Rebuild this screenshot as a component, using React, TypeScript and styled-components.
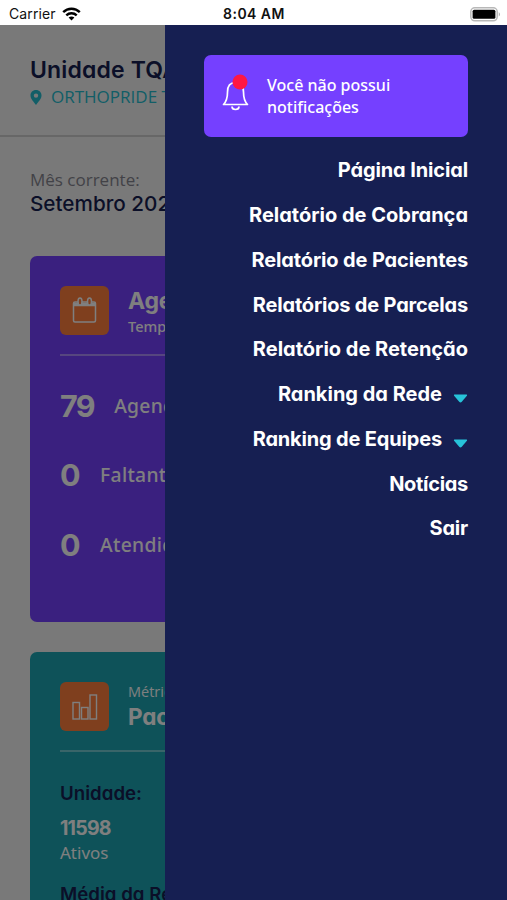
import React from "react";
import styled, { createGlobalStyle } from "styled-components";

const Global = createGlobalStyle`
  * { box-sizing: border-box; }
  body { margin: 0; overflow: hidden; background: #fff; }
`;

const Screen = styled.div`
  position: relative;
  width: 507px;
  height: 900px;
  overflow: hidden;
  display: flex;
  flex-direction: column;
  background: #fff;
  font-family: "Open Sans", sans-serif;
`;

const StatusBar = styled.div`
  height: 25px;
  flex: none;
  display: grid;
  grid-template-columns: 1fr auto 1fr;
  align-items: center;
  padding: 2px 6px 0 9px;
  color: #111;
  font: 400 14px/24px Inter, sans-serif;
`;
const Carrier = styled.div`
  display: flex;
  align-items: center;
  gap: 6px;
  letter-spacing: 0.1px;
`;
const Clock = styled.div`
  margin-right: 2px;
  font-weight: 600;
  letter-spacing: 0.45px;
`;
const Battery = styled.div`
  justify-self: end;
  display: flex;
`;

const Body = styled.div`
  position: relative;
  flex: 1;
  min-height: 0;
  overflow: hidden;
  background: #f2f2f2;
`;
const Shade = styled.div`
  position: absolute;
  inset: 0;
  background: rgba(0, 0, 0, 0.5);
`;

const Geo = styled.span<{ $size: number; $weight?: number; $track?: number; $line: number; $color?: string }>`
  display: block;
  white-space: nowrap;
  font-family: Inter, sans-serif;
  font-feature-settings: "cv11";
  font-size: ${(p) => p.$size}px;
  font-weight: ${(p) => p.$weight ?? 600};
  letter-spacing: ${(p) => p.$track ?? 0}px;
  line-height: ${(p) => p.$line}px;
  color: ${(p) => p.$color ?? "#161e50"};
`;
const Plain = styled.span<{ $size: number; $line: number; $weight?: number; $color?: string; $track?: number }>`
  display: block;
  white-space: nowrap;
  font-size: ${(p) => p.$size}px;
  font-weight: ${(p) => p.$weight ?? 400};
  line-height: ${(p) => p.$line}px;
  letter-spacing: ${(p) => p.$track ?? 0}px;
  color: ${(p) => p.$color ?? "#fff"};
`;
const Medium = styled(Plain)`
  font-family: "Noto Sans", "Open Sans", sans-serif;
`;

const Header = styled.header`
  height: 112px;
  padding: 30px 30px 0;
  border-bottom: 2px solid #cecece;
`;
const Place = styled.div`
  display: flex;
  align-items: center;
  gap: 9px;
`;
const Month = styled.section`
  height: 119px;
  padding: 32px 30px 0;
`;
const Card = styled.section<{ $bg: string; $height: number }>`
  height: ${(p) => p.$height}px;
  margin: 0 30px 30px;
  padding: 30px 30px 0;
  border-radius: 7px;
  background: ${(p) => p.$bg};
`;
const CardHead = styled.div<{ $line: string }>`
  display: flex;
  gap: 19px;
  height: 70px;
  border-bottom: 2px solid ${(p) => p.$line};
`;
const IconTile = styled.div`
  width: 49px;
  height: 49px;
  border-radius: 6px;
  background: #ff7f3d;
  display: grid;
  place-items: center;
`;
const Stats = styled.div`
  padding-top: 15px;
`;
const Stat = styled.div`
  display: flex;
  align-items: center;
  gap: 20.5px;
  height: 69.5px;
`;
const Figures = styled.div`
  padding-top: 30px;
  display: flex;
  flex-direction: column;
`;
const Count = styled.div`
  padding: 9px 0 18px;
`;

const Drawer = styled.aside`
  position: absolute;
  top: 0;
  right: 0;
  bottom: 0;
  width: 342px;
  padding: 30px 39px 0;
  background: #161f52;
`;
const Notice = styled.div`
  height: 82px;
  border-radius: 7px;
  background: #7540ff;
  display: flex;
  align-items: center;
  gap: 18px;
  padding: 1px 18px 0;
`;
const BellIcon = styled.svg`
  margin-top: -9px;
`;
const Menu = styled.nav`
  margin-top: 11px;
  display: flex;
  flex-direction: column;
`;
const MenuItem = styled.a`
  height: 44.75px;
  display: flex;
  justify-content: flex-end;
  align-items: center;
  gap: 11px;
`;
const Arrow = styled.svg`
  margin-top: 9px;
`;

const items: { label: string; track: number; sub?: boolean }[] = [
  { label: "Página Inicial", track: -0.12 },
  { label: "Relatório de Cobrança", track: 0 },
  { label: "Relatório de Pacientes", track: -0.13 },
  { label: "Relatórios de Parcelas", track: -0.19 },
  { label: "Relatório de Retenção", track: 0 },
  { label: "Ranking da Rede", track: 0, sub: true },
  { label: "Ranking de Equipes", track: -0.17, sub: true },
  { label: "Notícias", track: -0.3 },
  { label: "Sair", track: -0.2 },
];

const stats = [
  { value: "79", label: "Agendados" },
  { value: "0", label: "Faltantes" },
  { value: "0", label: "Atendidos" },
];

export default function App() {
  return (
    <Screen>
      <Global />
      <StatusBar>
        <Carrier>
          Carrier
          <svg width="19" height="14" viewBox="0 0 19 14">
            <g fill="none" stroke="#000" strokeWidth="2.4">
              <path d="M1.2 5.2C5.8.6 13.2.6 17.8 5.2" />
              <path d="M4.3 8.3C7.2 5.5 11.8 5.5 14.7 8.3" />
            </g>
            <path d="M6.6 10.6C8.3 9.2 10.7 9.2 12.4 10.6L9.5 13.5Z" />
          </svg>
        </Carrier>
        <Clock>8:04 AM</Clock>
        <Battery>
          <svg width="31" height="15" viewBox="0 0 31 15">
            <rect x="0.8" y="0.8" width="26.4" height="13" rx="4" fill="#fff" stroke="#b8b8b8" strokeWidth="1.5" />
            <rect x="2.6" y="2.8" width="22.8" height="9" rx="1.5" fill="#000" />
            <path d="M28.8 5Q31 7.3 28.8 9.6Z" fill="#a5a5a5" />
          </svg>
        </Battery>
      </StatusBar>
      <Body>
        <Header>
          <Geo $size={23} $line={30} $track={0.15}>Unidade TQA</Geo>
          <Place>
            <svg width="12" height="15" viewBox="0 0 12 15">
              <path fillRule="evenodd" fill="#25bdcf" d="M6 0C2.7 0 .5 2.4.5 5.5C.5 8.8 3.5 11.5 6 15C8.5 11.5 11.5 8.8 11.5 5.5C11.5 2.4 9.3 0 6 0ZM6 3.4A2.2 2.2 0 1 1 6 7.8A2.2 2.2 0 1 1 6 3.4Z" />
            </svg>
            <Plain $size={17} $line={24} $color="#25bdcf">ORTHOPRIDE TQA</Plain>
          </Place>
        </Header>
        <Month>
          <Plain $size={17} $line={22} $color="#85858f">Mês corrente:</Plain>
          <Geo $size={20.7} $line={26} $weight={550}>Setembro 2021</Geo>
        </Month>
        <Card $bg="#7540ff" $height={366}>
          <CardHead $line="#ad8cff">
            <IconTile>
              <svg width="25" height="27" viewBox="0 0 25 27" fill="none" stroke="#fff" strokeWidth="1.5">
                <rect x="1.5" y="5" width="22" height="20" rx="1.5" />
                <path d="M1.5 7.5H23.5" strokeWidth="3.5" />
                <ellipse cx="8" cy="4.5" rx="2" ry="3.5" fill="#ff7f3d" />
                <ellipse cx="17.5" cy="4.5" rx="2" ry="3.5" fill="#ff7f3d" />
              </svg>
            </IconTile>
            <div>
              <Geo $size={23} $line={30} $weight={680} $color="#fff" $track={-0.2}>Agendamentos</Geo>
              <Medium $size={14.5} $line={20} $weight={500}>Tempo real</Medium>
            </div>
          </CardHead>
          <Stats>
            {stats.map((s) => (
              <Stat key={s.label}>
                <Geo $size={30.5} $line={40} $weight={700} $color="#fff" $track={s.value === "79" ? -1.8 : -1}>{s.value}</Geo>
                <Medium $size={19.3} $line={28} $weight={500} $track={0.3}>{s.label}</Medium>
              </Stat>
            ))}
          </Stats>
        </Card>
        <Card $bg="#1ca5b3" $height={420}>
          <CardHead $line="#72cad3">
            <IconTile>
              <svg width="26" height="26" viewBox="0 0 26 26" fill="none" stroke="#fff" strokeWidth="1.4">
                <rect x="1" y="8.5" width="6.5" height="16.5" />
                <rect x="9.5" y="13.5" width="6.5" height="11.5" />
                <rect x="18" y="1" width="6.5" height="24" />
              </svg>
            </IconTile>
            <div>
              <Plain $size={14.5} $line={20}>Métricas</Plain>
              <Geo $size={22.5} $line={30} $weight={680} $color="#fff" $track={-0.2}>Pacientes</Geo>
            </div>
          </CardHead>
          <Figures>
            <Geo $size={18.7} $line={24}>Unidade:</Geo>
            <Count>
              <Geo $size={19.5} $line={26} $weight={680} $color="#fff" $track={-0.8}>11598</Geo>
              <Medium $size={17} $line={24}>Ativos</Medium>
            </Count>
            <Geo $size={18.7} $line={24}>Média da Rede:</Geo>
          </Figures>
        </Card>
        <Shade />
        <Drawer>
          <Notice>
            <BellIcon width="27" height="38" viewBox="0 0 27 38">
              <g fill="none" stroke="#fff" strokeWidth="1.7" strokeLinejoin="round">
                <path d="M1.5 31.5C4.5 28.5 5.5 25 5.5 19C5.5 13 8 9.5 13.5 9.5C19 9.5 21.5 13 21.5 19C21.5 25 22.5 28.5 25.5 31.5Z" />
                <path d="M10 33.5C10 37.5 17 37.5 17 33.5" />
              </g>
              <circle cx="18" cy="9" r="7.5" fill="#ff1744" />
            </BellIcon>
            <div>
              <Medium $size={16} $line={21.5} $weight={550}>Você não possui</Medium>
              <Medium $size={16} $line={21.5} $weight={550}>notificações</Medium>
            </div>
          </Notice>
          <Menu>
            {items.map((i) => (
              <MenuItem key={i.label}>
                <Geo $size={20} $line={28} $weight={650} $track={i.track} $color="#fff">{i.label}</Geo>
                {i.sub && (
                  <Arrow width="15" height="9" viewBox="0 0 14 9">
                    <path d="M.8.5H13.2Q14 1 13.4 1.8L8.3 7.8Q7 9 5.7 7.8L.6 1.8Q0 1 .8.5Z" fill="#27c3d9" />
                  </Arrow>
                )}
              </MenuItem>
            ))}
          </Menu>
        </Drawer>
      </Body>
    </Screen>
  );
}
